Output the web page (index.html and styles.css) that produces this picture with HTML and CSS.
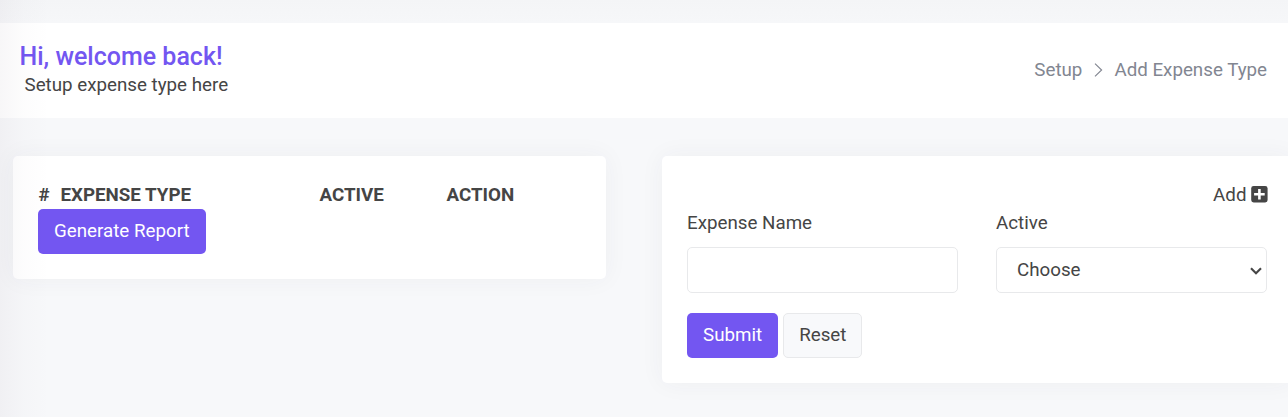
FILE: index.html
```html
<!DOCTYPE html>
<html lang="en">
<head>
<meta charset="utf-8">
<title>Add Expense Type</title>
<link rel="stylesheet" href="styles.css">
</head>
<body>
<header class="page-head">
  <div>
    <h1 class="title">Hi, welcome back!</h1>
    <p class="subtitle">Setup expense type here</p>
  </div>
  <nav class="crumbs">
    <a>Setup</a>
    <svg class="chevron" width="9" height="14" viewBox="0 0 9 14"><path d="M1 .7 7.6 7 1 13.3" fill="none" stroke="currentColor" stroke-width="1.15"/></svg>
    <a>Add Expense Type</a>
  </nav>
</header>
<main class="content">
  <section class="card">
    <table class="list">
      <thead><tr><th class="c-num">#</th><th class="c-type">EXPENSE TYPE</th><th class="c-active">ACTIVE</th><th class="c-action">ACTION</th></tr></thead>
    </table>
    <button class="btn btn-primary">Generate Report</button>
  </section>
  <section class="card">
    <div class="add">Add
      <svg class="plus" width="17" height="17" viewBox="0 0 17 17"><rect x="0.2" y="0.1" width="16.4" height="16.4" rx="2.4" fill="currentColor"/><path d="M8.4 3.1v10.4M3.1 8.3h10.6" stroke="#fff" stroke-width="2.6"/></svg>
    </div>
    <div class="fields">
      <div class="field"><label for="name">Expense Name</label><input class="control" id="name" type="text"></div>
      <div class="field"><label for="active">Active</label><select class="control select" id="active"><option>Choose</option></select>
        <svg class="caret" width="12" height="8" viewBox="0 0 12 8"><path d="M1 1.3 6 6.2 11 1.3" fill="none" stroke="currentColor" stroke-width="2.1"/></svg></div>
    </div>
    <div class="actions"><button class="btn btn-primary">Submit</button><button class="btn btn-light">Reset</button></div>
  </section>
</main>
<div class="edge-shade"></div>
</body>
</html>
```
FILE: styles.css
```css
* { box-sizing: border-box; }
body {
  margin: 0;
  height: 417px;
  padding-top: 23px;
  overflow: hidden;
  background: linear-gradient(#f4f5f7, #f6f7f9 23px, #f7f8fa 60px);
  color: #454545;
  font: 18.75px/28px Roboto, sans-serif;
}
.page-head {
  display: flex;
  justify-content: space-between;
  height: 95px;
  padding: 20px 21px 0 19.5px;
  background: #fff;
}
.title { margin: 0; font-size: 25px; line-height: 28px; font-weight: 500; color: #7356f1; }
.subtitle { margin: 0 0 0 5px; }
.crumbs { display: flex; align-items: center; height: 28px; margin-top: 13px; color: #828691; }
.chevron { margin: 0 11px 0 12px; }
.content {
  display: grid;
  grid-template-columns: 593px 630px;
  gap: 56px;
  align-items: start;
  padding: 38px 0 0 13px;
}
.card {
  padding: 25px;
  background: #fff;
  border-radius: 5px;
  box-shadow: 0 0 25px rgba(60, 65, 75, .05);
}
.list { table-layout: fixed; width: 543px; border-collapse: collapse; }
.list th { height: 28px; padding: 0 0 0 .5px; text-align: left; font-weight: 700; }
.c-num { width: 22px; }
.c-type { width: 259px; }
.c-active { width: 127px; }
.btn {
  display: block;
  height: 45px;
  padding: 0 15px;
  border: 1px solid transparent;
  border-radius: 5px;
  font: inherit;
  line-height: 43px;
}
.btn-primary { background: #7356f1; color: #fff; }
.btn-light { background: #f8f9fb; border-color: #e8e9eb; color: #454545; }
.add { display: flex; justify-content: flex-end; align-items: center; gap: 4.5px; margin-right: -1px; }
.plus { margin-bottom: 2px; }
.fields { display: grid; grid-template-columns: 271px 271px; gap: 38px; }
.field { position: relative; }
.field label { display: block; margin-bottom: 10px; }
.control {
  display: block;
  width: 100%;
  height: 46px;
  padding: 0 20px 1px;
  border: 1px solid #e8e9eb;
  border-radius: 5px;
  background: #fff;
  color: inherit;
  font: inherit;
}
.select { appearance: none; }
.caret { position: absolute; right: 5px; bottom: 18px; pointer-events: none; }
.actions { display: flex; gap: 5px; margin-top: 20px; }
.edge-shade {
  position: absolute;
  inset: 0 auto 0 0;
  width: 50px;
  background: linear-gradient(90deg, rgba(70, 45, 80, .038), rgba(70, 45, 80, .012) 50%, transparent);
  pointer-events: none;
}
```
